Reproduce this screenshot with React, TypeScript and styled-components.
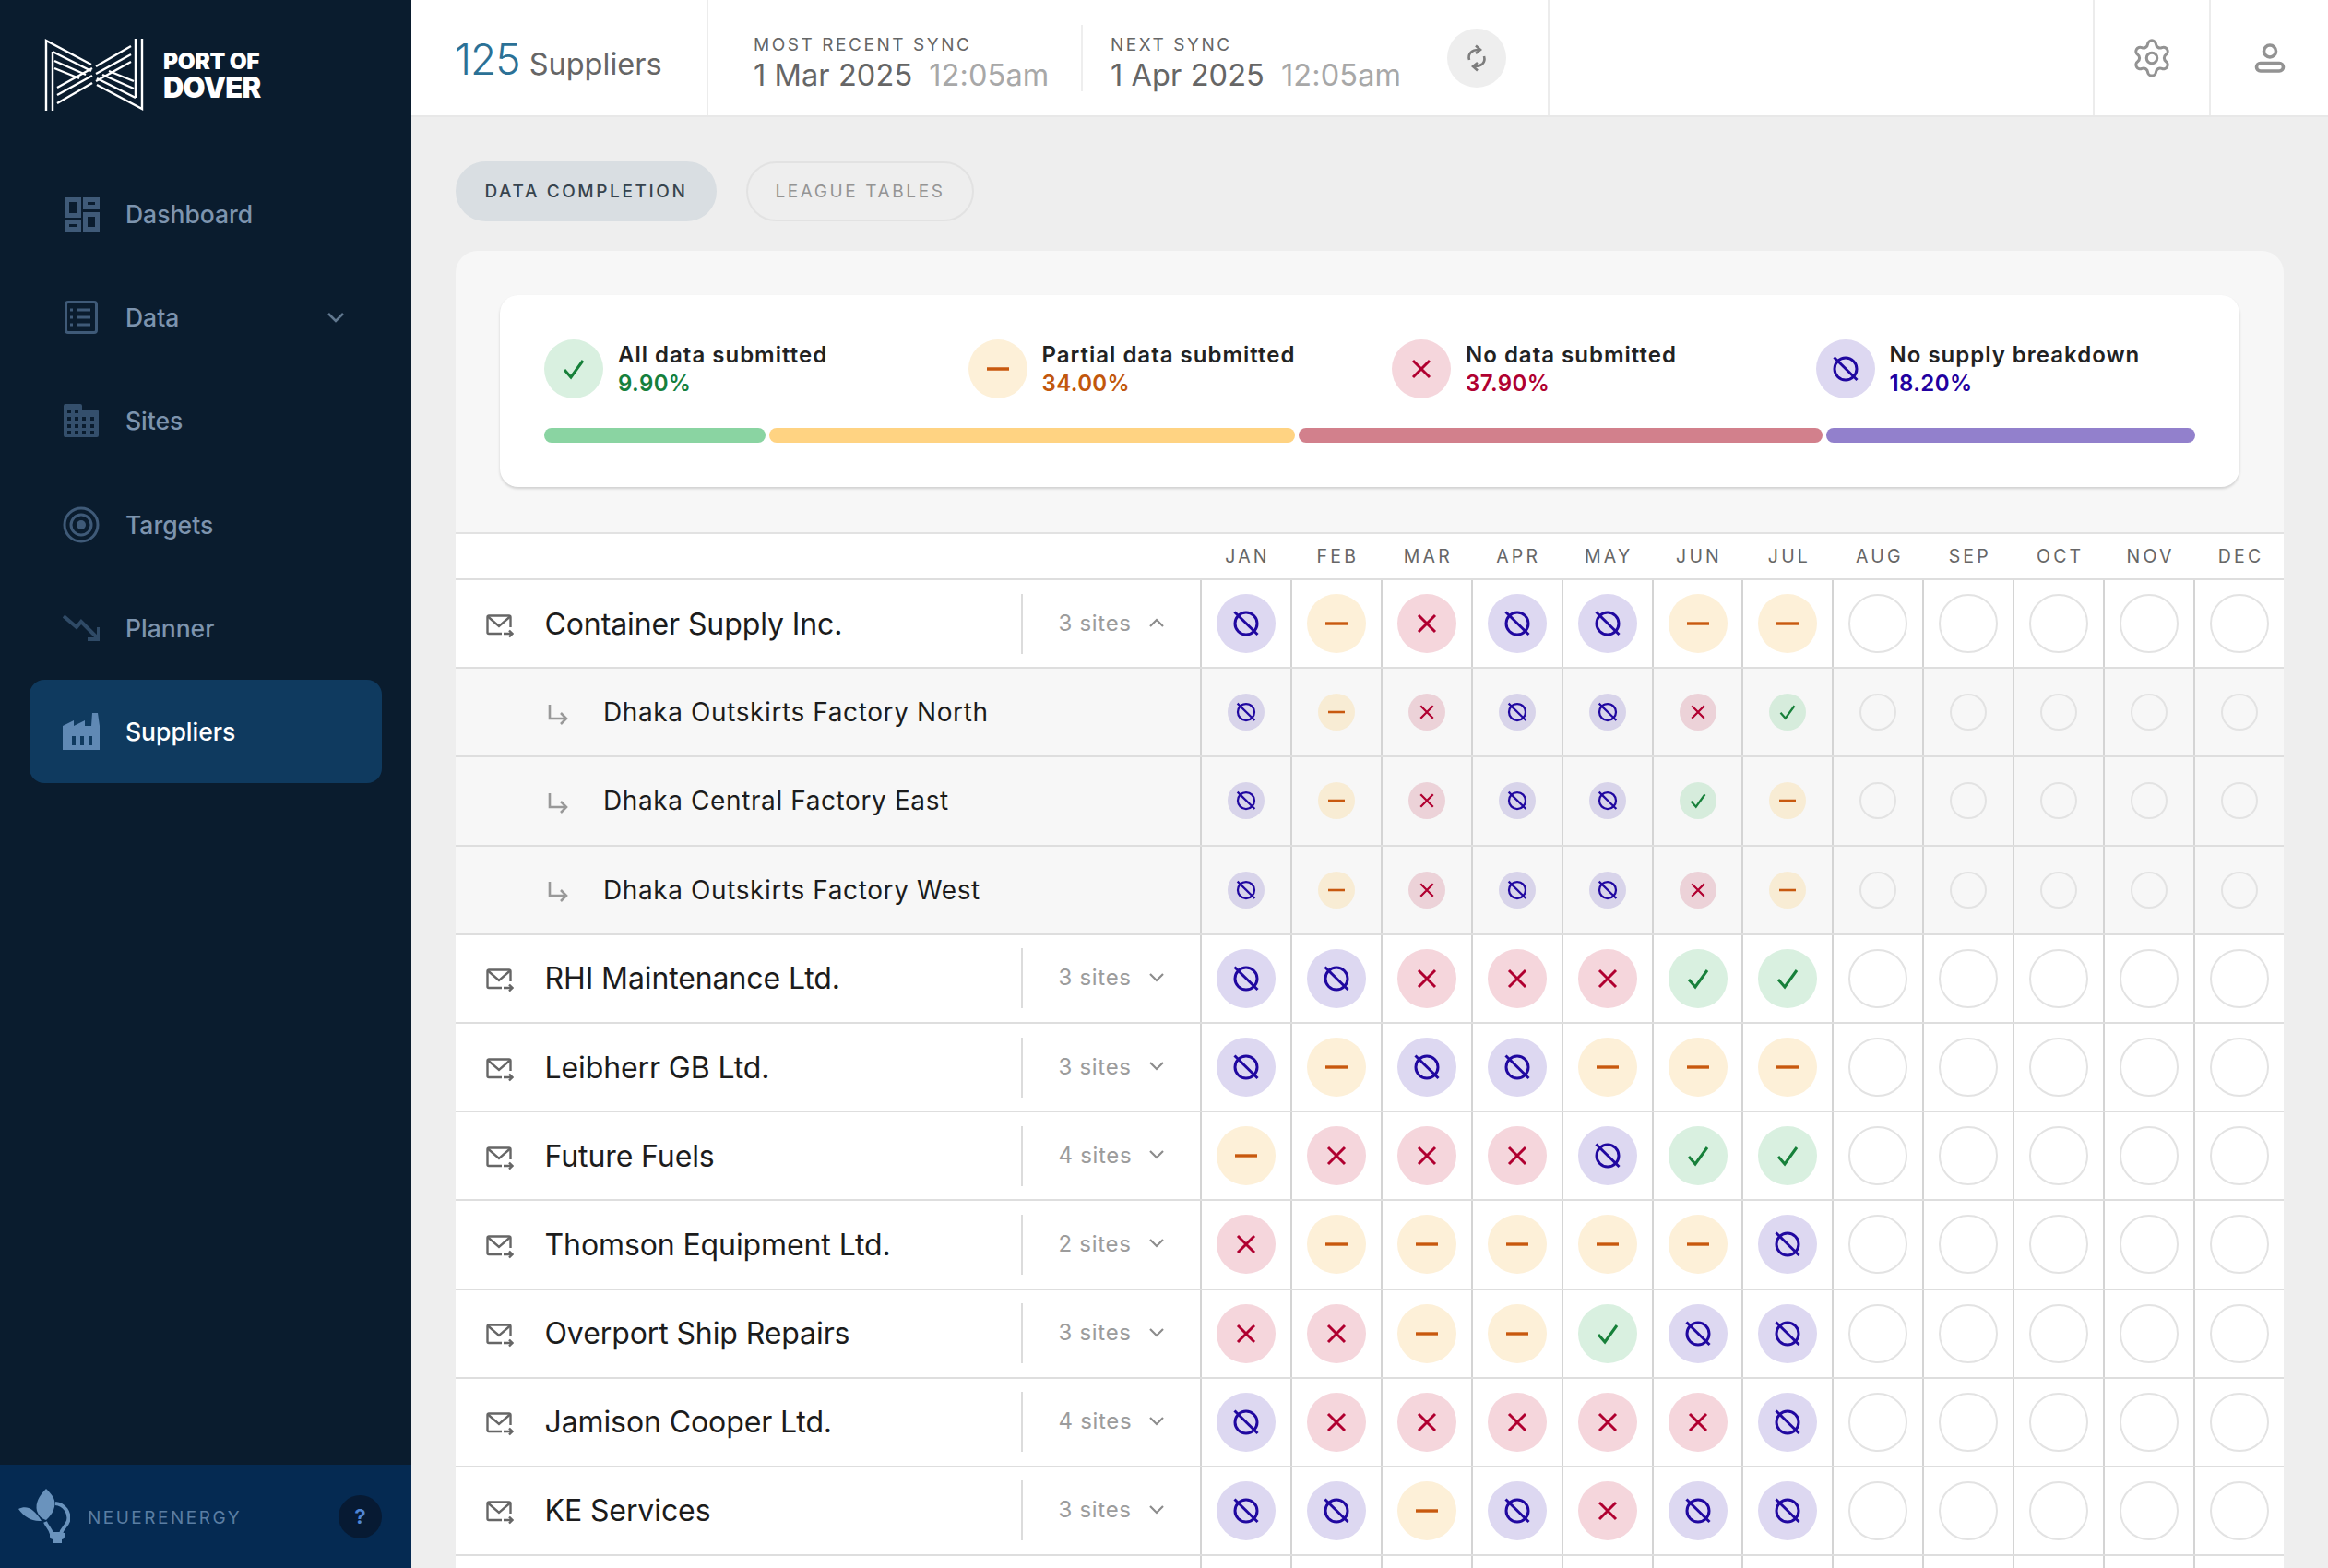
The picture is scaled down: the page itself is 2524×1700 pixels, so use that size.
// App.tsx
import React from "react";
import styled, { createGlobalStyle } from "styled-components";
import { Settings } from "lucide-react";

type Status = "N" | "D" | "X" | "C" | "E";

const GlobalStyle = createGlobalStyle`
  html, body {
    margin: 0;
    padding: 0;
    background: #eeeeee;
    font-family: Inter, "Liberation Sans", sans-serif;
  }
  * { box-sizing: border-box; }
`;

const Page = styled.div`
  display: flex;
  width: 2524px;
  height: 1700px;
  overflow: hidden;
`;

const Sidebar = styled.aside`
  flex: 0 0 446px;
  display: flex;
  flex-direction: column;
  background: #0a1c2e;
`;

const LogoRow = styled.div`
  display: flex;
  align-items: center;
  height: 176px;
  padding: 4px 0 18px 48px;
  gap: 21px;
`;

const LogoText = styled.div`
  color: #ffffff;
  font-weight: 900;
  display: flex;
  flex-direction: column;
  line-height: 1;
  span:first-child {
    font-size: 24.5px;
    letter-spacing: -0.3px;
    margin-top: 2px;
  }
  span:last-child {
    font-size: 31px;
    letter-spacing: -0.8px;
  }
`;

const Nav = styled.nav`
  display: flex;
  flex-direction: column;
  padding: 0 32px;
`;

const NavItem = styled.div<{ $active?: boolean }>`
  display: flex;
  align-items: center;
  height: 112.2px;
  padding-left: 36px;
  gap: 28px;
  border-radius: 16px;
  font-size: 26.5px;
  font-weight: 500;
  color: ${(p) => (p.$active ? "#ffffff" : "#7d94ae")};
  background: ${(p) => (p.$active ? "#0f3a5f" : "transparent")};
  svg {
    flex: 0 0 40px;
  }
`;

const NavChevron = styled.svg`
  margin-left: auto;
  margin-right: 30px;
`;

const SideFooter = styled.div`
  margin-top: auto;
  height: 112px;
  background: #052a52;
  display: flex;
  align-items: center;
  padding: 0 32px 0 20px;
  color: #5b7ea3;
`;

const FooterBrand = styled.span`
  margin-left: 19px;
  margin-top: 2px;
  font-size: 19px;
  letter-spacing: 2.5px;
`;

const HelpDot = styled.div`
  margin-left: auto;
  width: 47px;
  height: 47px;
  border-radius: 50%;
  background: #071a33;
  color: #4f86d4;
  display: flex;
  align-items: center;
  justify-content: center;
  font-size: 22px;
  font-weight: 700;
`;

const Main = styled.main`
  flex: 1;
  min-width: 0;
  display: flex;
  flex-direction: column;
`;

const TopBar = styled.header`
  display: flex;
  height: 127px;
  flex: 0 0 127px;
  background: #ffffff;
  border-bottom: 2px solid #e8e8e8;
`;

const CountBlock = styled.div`
  flex: 0 0 322px;
  display: flex;
  align-items: baseline;
  padding: 36px 0 0 47px;
  border-right: 2px solid #ececec;
  gap: 10px;
`;

const CountNumber = styled.span`
  font-size: 46px;
  font-weight: 300;
  color: #2b7196;
  letter-spacing: -1px;
`;

const CountLabel = styled.span`
  font-size: 32.5px;
  font-weight: 400;
  color: #666666;
`;

const SyncArea = styled.div`
  flex: 0 0 912px;
  display: flex;
  align-items: center;
  padding-left: 49px;
  border-right: 2px solid #ececec;
`;

const SyncBlock = styled.div<{ $width: number }>`
  flex: 0 0 ${(p) => p.$width}px;
  display: flex;
  flex-direction: column;
  gap: 2px;
  padding: 14px 0 2px;
`;

const SyncLabel = styled.div`
  font-size: 19px;
  letter-spacing: 2.55px;
  color: #666666;
`;

const SyncValue = styled.div`
  font-size: 32.5px;
  color: #666666;
  display: flex;
  gap: 18px;
  letter-spacing: 0.1px;
  span {
    color: #a8a8a8;
  }
`;

const SyncDivider = styled.div`
  flex: 0 0 2px;
  height: 72px;
  background: #eeeeee;
  margin-right: 30px;
`;

const SyncButton = styled.div`
  width: 64px;
  height: 64px;
  border-radius: 50%;
  background: #eeeeee;
  display: flex;
  align-items: center;
  justify-content: center;
`;

const TopSpacer = styled.div`
  flex: 1;
`;

const TopIconCell = styled.div<{ $width: number }>`
  flex: 0 0 ${(p) => p.$width}px;
  display: flex;
  align-items: center;
  justify-content: center;
  border-left: 2px solid #ececec;
  color: #939393;
`;

const Content = styled.div`
  flex: 1;
  min-height: 0;
  display: flex;
  flex-direction: column;
  padding: 48px 48px 0;
  background: #eeeeee;
`;

const Tabs = styled.div`
  display: flex;
  gap: 32px;
  margin-bottom: 32px;
`;

const Tab = styled.div<{ $active?: boolean }>`
  height: 65px;
  padding: 0 29.5px;
  border-radius: 33px;
  display: flex;
  align-items: center;
  font-size: 19px;
  font-weight: ${(p) => (p.$active ? 500 : 400)};
  letter-spacing: 2.6px;
  background: ${(p) => (p.$active ? "#d9dee2" : "transparent")};
  color: ${(p) => (p.$active ? "#37444e" : "#949494")};
  border: 2px solid ${(p) => (p.$active ? "#d9dee2" : "#e2e2e2")};
`;

const Card = styled.section`
  flex: 1;
  min-height: 0;
  background: #f7f7f7;
  border-radius: 24px 24px 0 0;
  padding-top: 48px;
  overflow: hidden;
`;

const LegendCard = styled.div`
  margin: 0 48px;
  height: 208px;
  padding: 48px 48px 0;
  background: #ffffff;
  border-radius: 20px;
  box-shadow: 0 2px 3px rgba(0, 0, 0, 0.16);
`;

const LegendGrid = styled.div`
  display: grid;
  grid-template-columns: repeat(4, 1fr);
  gap: 48px;
`;

const LegendItem = styled.div`
  display: flex;
  align-items: center;
  gap: 16px;
`;

const LegendTitle = styled.div`
  font-size: 24px;
  font-weight: 600;
  letter-spacing: 1px;
  color: #222222;
  line-height: 30px;
`;

const LegendValue = styled.div<{ $color: string }>`
  margin-top: 1px;
  font-size: 24px;
  font-weight: 600;
  letter-spacing: 0.4px;
  line-height: 30px;
  color: ${(p) => p.$color};
`;

const ProgressBar = styled.div`
  display: flex;
  gap: 4px;
  margin-top: 32px;
`;

const ProgressPart = styled.div<{ $grow: number; $color: string }>`
  flex: ${(p) => p.$grow} 0 0;
  height: 16px;
  border-radius: 8px;
  background: ${(p) => p.$color};
`;

const Table = styled.div`
  margin-top: 49px;
  background: #ffffff;
  border-top: 2px solid #e2e2e2;
`;

const GRID = "807px repeat(12, 1fr)";

const MonthRow = styled.div`
  display: grid;
  grid-template-columns: ${GRID};
  height: 50px;
  border-bottom: 2px solid #dedede;
`;

const MonthLabel = styled.div`
  display: flex;
  align-items: center;
  justify-content: center;
  padding-left: 5px;
  font-size: 19.5px;
  letter-spacing: 3.2px;
  color: #666666;
`;

const Row = styled.div<{ $sub?: boolean }>`
  display: grid;
  grid-template-columns: ${GRID};
  height: 96.2px;
  border-bottom: 2px solid #dedede;
  background: ${(p) => (p.$sub ? "#f7f7f7" : "#ffffff")};
`;

const NameCell = styled.div`
  display: flex;
  align-items: center;
  padding-left: 33px;
`;

const SupplierName = styled.div`
  margin-left: 33.5px;
  font-size: 32px;
  letter-spacing: -0.1px;
  color: #1c1c1c;
  flex: 0 0 516px;
`;

const SitesCell = styled.div`
  align-self: center;
  height: 65px;
  flex: 1;
  display: flex;
  align-items: center;
  border-left: 2px solid #dcdcdc;
  padding: 0 0 2px 39px;
  font-size: 24px;
  letter-spacing: 0.7px;
  color: #9c9c9c;
`;

const SiteChevron = styled.svg`
  margin-left: 19px;
`;

const SubName = styled.div`
  margin-left: 38px;
  font-size: 28px;
  letter-spacing: 0.6px;
  color: #1c1c1c;
`;

const SubNameCell = styled(NameCell)`
  padding-left: 100px;
`;

const IconNudge = styled.span`
  display: flex;
  margin-top: 5px;
`;

const MonthCell = styled.div`
  display: flex;
  align-items: center;
  justify-content: center;
  border-left: 2px solid #d4d4d4;
`;

const statusColors: Record<Status, { bg: string; subBg: string; fg: string }> = {
  N: { bg: "#ddd8f1", subBg: "#d8d4ea", fg: "#2008a0" },
  D: { bg: "#fdf0d8", subBg: "#f8ecd4", fg: "#c8590f" },
  X: { bg: "#f5d6dc", subBg: "#ecd2d8", fg: "#b00030" },
  C: { bg: "#d9f0e0", subBg: "#d6ecdc", fg: "#17803a" },
  E: { bg: "transparent", subBg: "transparent", fg: "transparent" },
};

const Dot = styled.div<{ $status: Status; $size: number; $sub?: boolean }>`
  width: ${(p) => p.$size}px;
  height: ${(p) => p.$size}px;
  flex: 0 0 ${(p) => p.$size}px;
  border-radius: 50%;
  display: flex;
  align-items: center;
  justify-content: center;
  color: ${(p) => statusColors[p.$status].fg};
  background: ${(p) => (p.$sub ? statusColors[p.$status].subBg : statusColors[p.$status].bg)};
  border: ${(p) => (p.$status === "E" ? "2px solid #e3e3e3" : "none")};
`;

const StatusGlyph = ({ status, size }: { status: Status; size: number }) => {
  if (status === "E") return null;
  return (
    <svg width={size} height={size} viewBox="0 0 32 32" fill="none" stroke="currentColor" strokeWidth={3}>
      {status === "N" && (
        <>
          <circle cx="16" cy="16" r="12" />
          <path d="M3.5 3.5 L28.5 28" />
        </>
      )}
      {status === "D" && <path d="M4 16 H28" strokeWidth={3.4} />}
      {status === "X" && <path d="M7 7 L25 25 M25 7 L7 25" />}
      {status === "C" && <path d="M6 17 L13 25 L26 7" />}
    </svg>
  );
};

const StatusDot = ({ status, sub }: { status: Status; sub?: boolean }) => (
  <Dot $status={status} $size={sub ? 40 : 64} $sub={sub}>
    <StatusGlyph status={status} size={sub ? 24 : 32} />
  </Dot>
);

const ForwardMail = () => (
  <IconNudge>
    <svg width="30" height="26" viewBox="0 0 30 26" fill="none" stroke="#666666" strokeWidth="2.4">
      <path d="M17 21 H3 a1.5 1.5 0 0 1 -1.5 -1.5 V3 a1.5 1.5 0 0 1 1.5 -1.5 H25 a1.5 1.5 0 0 1 1.5 1.5 V14" />
      <path d="M2 2.5 L14 13 L26 2.5" />
      <path d="M19 21 H28 M25 17.5 L28.5 21 L25 24.5" />
    </svg>
  </IconNudge>
);

const SubArrow = () => (
  <IconNudge>
    <svg width="22" height="24" viewBox="0 0 22 24" fill="none" stroke="#999999" strokeWidth="2.6">
      <path d="M2 1 V16 H20 M14 10 L20 16 L14 22" />
    </svg>
  </IconNudge>
);

const Chevron = ({ up }: { up?: boolean }) => (
  <SiteChevron width="16" height="10" viewBox="0 0 16 10" fill="none" stroke="#8c8c8c" strokeWidth="2.2">
    <path d={up ? "M1 9 L8 2 L15 9" : "M1 1 L8 8 L15 1"} />
  </SiteChevron>
);

const PortLogo = () => (
  <svg width="108" height="80" viewBox="0 0 108 80" fill="none" stroke="#ffffff" strokeWidth="2.4">
    {[0, 180].map((r) => (
      <g key={r} transform={`rotate(${r} 54 40)`}>
        <path d="M2 79 V3 L51 29" />
        <path d="M9 79 V15" />
        <path d="M9 15 L51 36" />
        <path d="M11 25 L45 40" />
        <path d="M11 33 L38 44" />
        <path d="M14 54 L52 33" />
        <path d="M14 62 L52 41" />
        <path d="M14 71 L52 49" />
      </g>
    ))}
  </svg>
);

const NeuerLogo = () => (
  <svg width="56" height="60" viewBox="0 0 56 60" fill="#6a93bd">
    <path d="M30 0 C22 8 18 16 20 24 C22 30 26 33 30 34 C37 28 42 18 38 10 C36 6 33 3 30 0 Z" />
    <path d="M0 22 C8 18 16 20 25 35 C14 36 6 30 0 22 Z" />
    <path
      d="M40 16 C50 17 56 26 54 35 C52 41 47 43 46 49 H36 C35 44 31 41 29 36"
      fill="none"
      stroke="#6a93bd"
      strokeWidth="4"
    />
    <path d="M34 48 H50 V52 C50 54 48 55 47 55 V59 H38 V55 C36 55 34 54 34 52 Z" />
  </svg>
);

const DashboardIcon = () => (
  <svg width="40" height="40" viewBox="0 0 40 40" fill="none" stroke="#3f5a78" strokeWidth="5">
    <rect x="4.5" y="4.5" width="13" height="17" />
    <rect x="24.5" y="4.5" width="13" height="8" />
    <rect x="4.5" y="28.5" width="13" height="8" />
    <rect x="24.5" y="20.5" width="13" height="16" />
  </svg>
);

const DataIcon = () => (
  <svg width="40" height="40" viewBox="0 0 40 40" fill="none" stroke="#3f5a78" strokeWidth="3">
    <rect x="3.5" y="3.5" width="33" height="33" rx="2.5" />
    <path d="M15 12 H30 M15 20 H30 M15 28 H30" />
    <path d="M8 12 H11 M8 20 H11 M8 28 H11" />
  </svg>
);

const SitesIcon = () => (
  <svg width="40" height="40" viewBox="0 0 40 40" fill="#344f6c">
    <path
      fillRule="evenodd"
      d="M3 2 H19 a2 2 0 0 1 2 2 V8 H37 a2 2 0 0 1 2 2 V36 a2 2 0 0 1 -2 2 H3 a2 2 0 0 1 -2 -2 V4 a2 2 0 0 1 2 -2 Z M5 8 v4 h4 v-4 Z M13 8 v4 h4 v-4 Z M5 16 v4 h4 v-4 Z M13 16 v4 h4 v-4 Z M21 16 v4 h4 v-4 Z M30 16 v4 h4 v-4 Z M5 24 v4 h4 v-4 Z M13 24 v4 h4 v-4 Z M21 24 v4 h4 v-4 Z M30 24 v4 h4 v-4 Z M5 31 v3 h4 v-3 Z M13 31 v3 h4 v-3 Z M21 31 v3 h4 v-3 Z M30 31 v3 h4 v-3 Z"
    />
  </svg>
);

const TargetIcon = () => (
  <svg width="40" height="40" viewBox="0 0 40 40" fill="none" stroke="#3f5a78" strokeWidth="3">
    <circle cx="20" cy="20" r="18" />
    <circle cx="20" cy="20" r="11" />
    <circle cx="20" cy="20" r="5" fill="#3f5a78" stroke="none" />
  </svg>
);

const PlannerIcon = () => (
  <svg width="40" height="40" viewBox="0 0 40 40" fill="none" stroke="#2f4a66" strokeWidth="4">
    <path d="M1 7 L15 19 L20 13 L37 30" />
    <path d="M39 19 V32 H27" />
  </svg>
);

const FactoryIcon = () => (
  <svg width="40" height="40" viewBox="0 0 40 40">
    <path
      fillRule="evenodd"
      fill="#6089b4"
      d="M0 40 V14 L12 8 V14 L24 8 V14 H31 L32 0 H38 L40 14 V40 Z M10 25 V35 H14 V25 Z M19 25 V35 H23 V25 Z M28 25 V35 H32 V25 Z"
    />
  </svg>
);

const SyncIcon = () => (
  <svg width="22" height="30" viewBox="0 0 22 30" fill="none" stroke="#7d7d7d" strokeWidth="2.6">
    <path d="M3 17 C1 10 6 6 13 6" />
    <path d="M10 1.5 L15 6 L10 10" />
    <path d="M19 13 C21 20 16 24 9 24" />
    <path d="M12 28.5 L7 24 L12 20" />
  </svg>
);

const UserIcon = () => (
  <svg width="34" height="34" viewBox="0 0 34 34" fill="none" stroke="#939393" strokeWidth="3.6">
    <circle cx="17" cy="9.5" r="6.5" />
    <rect x="2.5" y="22.5" width="29" height="8.5" rx="4.25" />
  </svg>
);

const months = ["JAN", "FEB", "MAR", "APR", "MAY", "JUN", "JUL", "AUG", "SEP", "OCT", "NOV", "DEC"];

const legend: { status: Status; title: string; value: string; color: string }[] = [
  { status: "C", title: "All data submitted", value: "9.90%", color: "#15803d" },
  { status: "D", title: "Partial data submitted", value: "34.00%", color: "#c2570c" },
  { status: "X", title: "No data submitted", value: "37.90%", color: "#b00030" },
  { status: "N", title: "No supply breakdown", value: "18.20%", color: "#2100a0" },
];

const bars = [
  { grow: 240, color: "#8ad4a2" },
  { grow: 570, color: "#ffd382" },
  { grow: 569, color: "#d2808c" },
  { grow: 400, color: "#9280cc" },
];

const rows: { name: string; sites?: string; open?: boolean; sub?: boolean; data: string }[] = [
  { name: "Container Supply Inc.", sites: "3 sites", open: true, data: "NDXNNDD" },
  { name: "Dhaka Outskirts Factory North", sub: true, data: "NDXNNXC" },
  { name: "Dhaka Central Factory East", sub: true, data: "NDXNNCD" },
  { name: "Dhaka Outskirts Factory West", sub: true, data: "NDXNNXD" },
  { name: "RHI Maintenance Ltd.", sites: "3 sites", data: "NNXXXCC" },
  { name: "Leibherr GB Ltd.", sites: "3 sites", data: "NDNNDDD" },
  { name: "Future Fuels", sites: "4 sites", data: "DXXXNCC" },
  { name: "Thomson Equipment Ltd.", sites: "2 sites", data: "XDDDDDN" },
  { name: "Overport Ship Repairs", sites: "3 sites", data: "XXDDCNN" },
  { name: "Jamison Cooper Ltd.", sites: "4 sites", data: "NXXXXXN" },
  { name: "KE Services", sites: "3 sites", data: "NNDNXNN" },
];

const MonthCells = ({ data, sub }: { data: string; sub?: boolean }) => (
  <>
    {months.map((m, i) => (
      <MonthCell key={m}>
        <StatusDot status={(data[i] as Status) || "E"} sub={sub} />
      </MonthCell>
    ))}
  </>
);

const App = () => {
  return (
    <Page>
      <GlobalStyle />
      <Sidebar>
        <LogoRow>
          <PortLogo />
          <LogoText>
            <span>PORT OF</span>
            <span>DOVER</span>
          </LogoText>
        </LogoRow>
        <Nav>
          <NavItem>
            <DashboardIcon />
            Dashboard
          </NavItem>
          <NavItem>
            <DataIcon />
            Data
            <NavChevron width="20" height="12" viewBox="0 0 20 12" fill="none" stroke="#61788f" strokeWidth="2.6">
              <path d="M2 2 L10 10 L18 2" />
            </NavChevron>
          </NavItem>
          <NavItem>
            <SitesIcon />
            Sites
          </NavItem>
          <NavItem>
            <TargetIcon />
            Targets
          </NavItem>
          <NavItem>
            <PlannerIcon />
            Planner
          </NavItem>
          <NavItem $active>
            <FactoryIcon />
            Suppliers
          </NavItem>
        </Nav>
        <SideFooter>
          <NeuerLogo />
          <FooterBrand>NEUERENERGY</FooterBrand>
          <HelpDot>?</HelpDot>
        </SideFooter>
      </Sidebar>
      <Main>
        <TopBar>
          <CountBlock>
            <CountNumber>125</CountNumber>
            <CountLabel>Suppliers</CountLabel>
          </CountBlock>
          <SyncArea>
            <SyncBlock $width={355}>
              <SyncLabel>MOST RECENT SYNC</SyncLabel>
              <SyncValue>
                1 Mar 2025 <span>12:05am</span>
              </SyncValue>
            </SyncBlock>
            <SyncDivider />
            <SyncBlock $width={365}>
              <SyncLabel>NEXT SYNC</SyncLabel>
              <SyncValue>
                1 Apr 2025 <span>12:05am</span>
              </SyncValue>
            </SyncBlock>
            <SyncButton>
              <SyncIcon />
            </SyncButton>
          </SyncArea>
          <TopSpacer />
          <TopIconCell $width={126}>
            <Settings size={46} strokeWidth={1.6} />
          </TopIconCell>
          <TopIconCell $width={129}>
            <UserIcon />
          </TopIconCell>
        </TopBar>
        <Content>
          <Tabs>
            <Tab $active>DATA COMPLETION</Tab>
            <Tab>LEAGUE TABLES</Tab>
          </Tabs>
          <Card>
            <LegendCard>
              <LegendGrid>
                {legend.map((l) => (
                  <LegendItem key={l.title}>
                    <StatusDot status={l.status} />
                    <div>
                      <LegendTitle>{l.title}</LegendTitle>
                      <LegendValue $color={l.color}>{l.value}</LegendValue>
                    </div>
                  </LegendItem>
                ))}
              </LegendGrid>
              <ProgressBar>
                {bars.map((b) => (
                  <ProgressPart key={b.color} $grow={b.grow} $color={b.color} />
                ))}
              </ProgressBar>
            </LegendCard>
            <Table>
              <MonthRow>
                <div />
                {months.map((m) => (
                  <MonthLabel key={m}>{m}</MonthLabel>
                ))}
              </MonthRow>
              {rows.map((r) => (
                <Row key={r.name} $sub={r.sub}>
                  {r.sub ? (
                    <SubNameCell>
                      <SubArrow />
                      <SubName>{r.name}</SubName>
                    </SubNameCell>
                  ) : (
                    <NameCell>
                      <ForwardMail />
                      <SupplierName>{r.name}</SupplierName>
                      <SitesCell>
                        {r.sites}
                        <Chevron up={r.open} />
                      </SitesCell>
                    </NameCell>
                  )}
                  <MonthCells data={r.data} sub={r.sub} />
                </Row>
              ))}
              <Row>
                <div />
                <MonthCells data="" />
              </Row>
            </Table>
          </Card>
        </Content>
      </Main>
    </Page>
  );
};

export default App;
